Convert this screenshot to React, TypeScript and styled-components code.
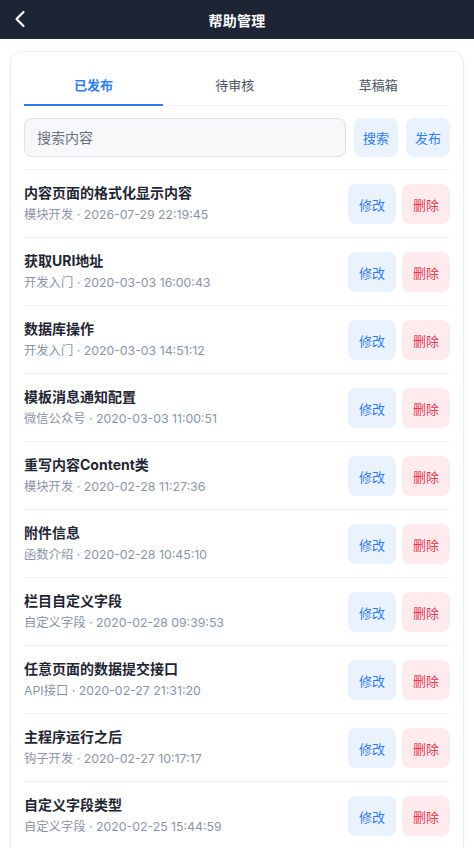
import styled, { createGlobalStyle } from "styled-components";

const GlobalStyle = createGlobalStyle`
  body {
    margin: 0;
    background: #ffffff;
    font-family: "Inter", "Noto Sans CJK SC", sans-serif;
    -webkit-font-smoothing: antialiased;
  }
  * { box-sizing: border-box; }
`;

const Page = styled.div`
  min-height: 848px;
  background: #ffffff;
`;

const Header = styled.header`
  height: 39px;
  background: #1d2535;
  display: flex;
  align-items: center;
  justify-content: center;
  position: relative;
`;

const BackButton = styled.button`
  position: absolute;
  left: 8px;
  top: 6px;
  width: 24px;
  height: 26px;
  border: 0;
  background: transparent;
  padding: 0;
  display: flex;
  align-items: center;
  justify-content: center;
`;

const HeaderTitle = styled.h1`
  margin: 0;
  color: #ffffff;
  font-size: 14px;
  font-weight: 700;
  letter-spacing: 0.3px;
`;

const Card = styled.main`
  margin: 12px 10px 0;
  background: #ffffff;
  border: 1px solid #eceff4;
  border-bottom: 0;
  border-radius: 12px 12px 0 0;
  padding: 12px 13px 0;
  box-shadow: 0 1px 4px rgba(15, 23, 42, 0.03);
`;

const Tabs = styled.nav`
  display: grid;
  grid-template-columns: 139px 1fr 1fr;
  border-bottom: 1px solid #eef1f5;
`;

const Tab = styled.div<{ $active?: boolean }>`
  height: 42px;
  display: flex;
  align-items: center;
  justify-content: center;
  font-size: 13px;
  font-weight: ${(p) => (p.$active ? 600 : 400)};
  color: ${(p) => (p.$active ? "#2f7cf6" : "#4b5563")};
  border-bottom: 2px solid ${(p) => (p.$active ? "#2f7cf6" : "transparent")};
  margin-bottom: -1px;
`;

const SearchRow = styled.div`
  display: flex;
  gap: 8px;
  margin: 12px 0 12px;
  height: 39px;
`;

const SearchInput = styled.input`
  flex: 1;
  min-width: 0;
  height: 39px;
  border: 1px solid #dce2eb;
  background: #f6f8fa;
  border-radius: 8px;
  padding: 0 12px;
  font-family: inherit;
  font-size: 14px;
  color: #1f2937;
  outline: none;
  &::placeholder {
    color: #6b7280;
  }
`;

const ActionButton = styled.button<{ $tone: "blue" | "red"; $w: number; $h: number }>`
  width: ${(p) => p.$w}px;
  height: ${(p) => p.$h}px;
  flex-shrink: 0;
  border: 0;
  border-radius: 8px;
  font-family: inherit;
  font-size: 13px;
  background: ${(p) => (p.$tone === "blue" ? "#eaf2fe" : "#ffebee")};
  color: ${(p) => (p.$tone === "blue" ? "#2f7cf6" : "#e33a55")};
`;

const List = styled.ul`
  list-style: none;
  margin: 0;
  padding: 0;
`;

const Row = styled.li`
  border-top: 1px solid #eef1f5;
  padding: 14px 0 13px;
  display: flex;
  align-items: center;
  gap: 6px;
`;

const RowText = styled.div`
  flex: 1;
  min-width: 0;
  display: flex;
  flex-direction: column;
  gap: 4px;
`;

const RowTitle = styled.div`
  font-size: 14px;
  line-height: 18px;
  font-weight: 700;
  color: #1f2633;
  white-space: nowrap;
  overflow: hidden;
  text-overflow: ellipsis;
`;

const RowMeta = styled.div`
  font-size: 12.3px;
  line-height: 18px;
  color: #8a94a6;
`;

const items = [
  ["内容页面的格式化显示内容", "模块开发", "2026-07-29 22:19:45"],
  ["获取URI地址", "开发入门", "2020-03-03 16:00:43"],
  ["数据库操作", "开发入门", "2020-03-03 14:51:12"],
  ["模板消息通知配置", "微信公众号", "2020-03-03 11:00:51"],
  ["重写内容Content类", "模块开发", "2020-02-28 11:27:36"],
  ["附件信息", "函数介绍", "2020-02-28 10:45:10"],
  ["栏目自定义字段", "自定义字段", "2020-02-28 09:39:53"],
  ["任意页面的数据提交接口", "API接口", "2020-02-27 21:31:20"],
  ["主程序运行之后", "钩子开发", "2020-02-27 10:17:17"],
  ["自定义字段类型", "自定义字段", "2020-02-25 15:44:59"],
];

export default function App() {
  return (
    <Page>
      <GlobalStyle />
      <Header>
        <BackButton aria-label="返回">
          <svg width="12" height="18" viewBox="0 0 12 18" fill="none">
            <path d="M9.5 2 L2.5 9 L9.5 16" stroke="#ffffff" strokeWidth="2.2" strokeLinecap="round" strokeLinejoin="round" />
          </svg>
        </BackButton>
        <HeaderTitle>帮助管理</HeaderTitle>
      </Header>
      <Card>
        <Tabs>
          <Tab $active>已发布</Tab>
          <Tab>待审核</Tab>
          <Tab>草稿箱</Tab>
        </Tabs>
        <SearchRow>
          <SearchInput placeholder="搜索内容" />
          <ActionButton $tone="blue" $w={44} $h={39}>搜索</ActionButton>
          <ActionButton $tone="blue" $w={44} $h={39}>发布</ActionButton>
        </SearchRow>
        <List>
          {items.map(([title, cat, time]) => (
            <Row key={title}>
              <RowText>
                <RowTitle>{title}</RowTitle>
                <RowMeta>
                  {cat} · {time}
                </RowMeta>
              </RowText>
              <ActionButton $tone="blue" $w={48} $h={40}>修改</ActionButton>
              <ActionButton $tone="red" $w={48} $h={40}>删除</ActionButton>
            </Row>
          ))}
        </List>
      </Card>
    </Page>
  );
}
